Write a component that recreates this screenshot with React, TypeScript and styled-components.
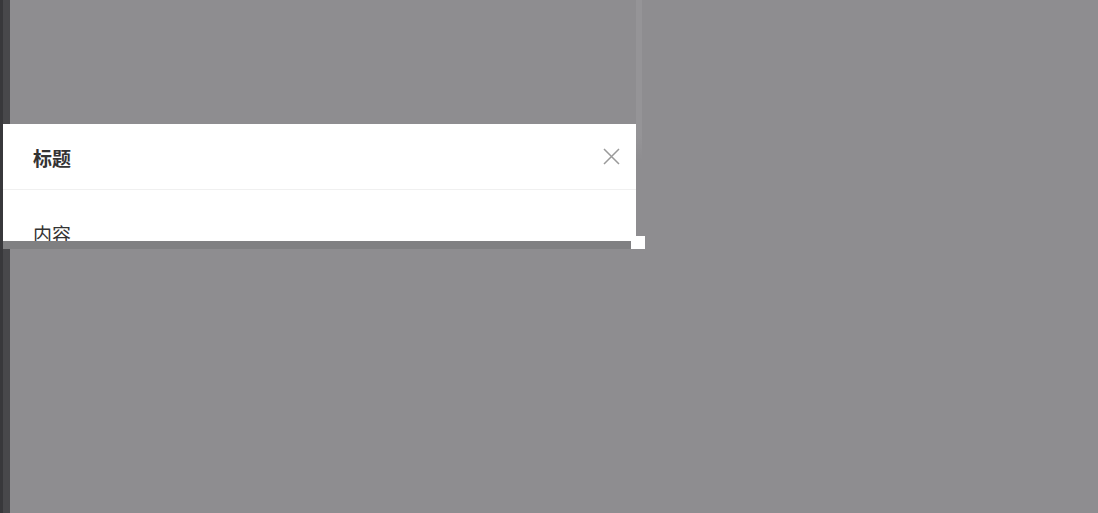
import React from "react";
import styled, { createGlobalStyle } from "styled-components";

const Global = createGlobalStyle`
  html, body { margin: 0; padding: 0; height: 100%; overflow: hidden; }
  #root { height: 100%; }
  body { font-family: "Noto Sans CJK SC", "Noto Sans", sans-serif; }
`;

const Page = styled.div`
  position: relative;
  display: flex;
  width: 1098px;
  height: 513px;
  background: #8e8d90;
  overflow: hidden;
`;

const Rail = styled.div`
  width: 10px;
  flex: none;
  background: linear-gradient(to right, #38383b 0 3px, #48484b 3px 10px);
`;

const Canvas = styled.div`
  flex: 1;
  display: flex;
`;

const Spacer = styled.div`
  width: 626px;
  flex: none;
`;

const Track = styled.div`
  width: 6px;
  height: 160px;
  background: linear-gradient(to bottom, #959497 0%, #959497 85%, #8e8d90 100%);
`;

const Modal = styled.div`
  position: absolute;
  left: 3px;
  top: 124px;
  width: 633px;
  display: flex;
  flex-direction: column;
`;

const Sheet = styled.div`
  height: 117px;
  background: #ffffff;
  display: flex;
  flex-direction: column;
  overflow: hidden;
`;

const Header = styled.div`
  height: 66px;
  flex: none;
  box-sizing: border-box;
  border-bottom: 1px solid #f0f0f0;
  display: flex;
  align-items: center;
  justify-content: space-between;
  padding: 0 16px 0 30px;
`;

const Title = styled.div`
  font-size: 19px;
  font-weight: 700;
  color: #333333;
  line-height: 1;
  margin-top: 1px;
`;

const Close = styled.button`
  width: 18px;
  height: 18px;
  border: none;
  background: transparent;
  padding: 0;
  display: flex;
  align-items: center;
  justify-content: center;
`;

const Body = styled.div`
  padding: 34px 30px 0;
  font-size: 19px;
  color: #333333;
  line-height: 1;
`;

const Foot = styled.div`
  display: flex;
  height: 8px;
`;

const Bar = styled.div`
  width: 628px;
  height: 8px;
  background: #808082;
`;

const Handle = styled.div`
  position: absolute;
  right: -9px;
  bottom: 0;
  width: 14px;
  height: 13px;
  background: #ffffff;
`;

export default function App() {
  return (
    <>
      <Global />
      <Page>
        <Rail />
        <Canvas>
          <Spacer />
          <Track />
        </Canvas>
        <Modal>
          <Sheet>
            <Header>
              <Title>标题</Title>
              <Close aria-label="close">
                <svg width="17" height="17" viewBox="0 0 17 17">
                  <path d="M1 1L16 16M16 1L1 16" stroke="#9a9a9a" strokeWidth="1.5" fill="none" />
                </svg>
              </Close>
            </Header>
            <Body>内容</Body>
          </Sheet>
          <Foot>
            <Bar />
          </Foot>
          <Handle />
        </Modal>
      </Page>
    </>
  );
}
